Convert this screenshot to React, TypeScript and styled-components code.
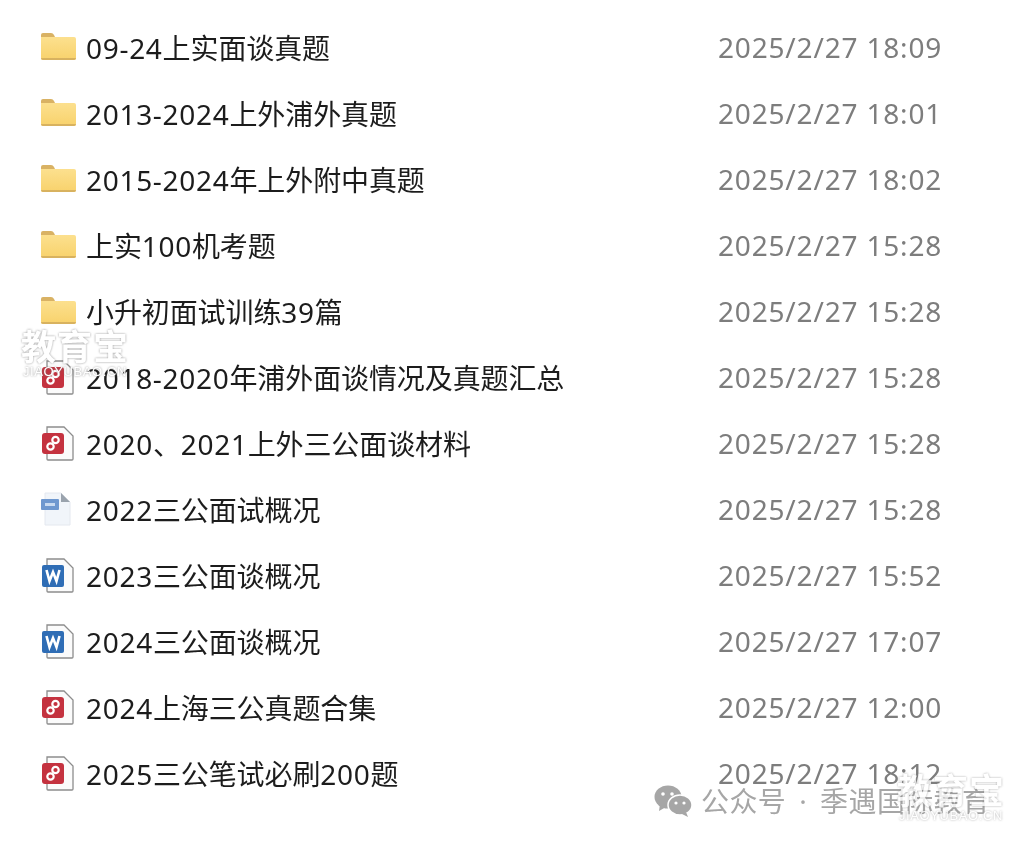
import React from "react";
import styled, { createGlobalStyle } from "styled-components";

type Kind = "folder" | "ppt" | "doc" | "word";

type FileItem = {
  name: string;
  date: string;
  kind: Kind;
};

const files: FileItem[] = [
  { name: "09-24上实面谈真题", date: "2025/2/27 18:09", kind: "folder" },
  { name: "2013-2024上外浦外真题", date: "2025/2/27 18:01", kind: "folder" },
  { name: "2015-2024年上外附中真题", date: "2025/2/27 18:02", kind: "folder" },
  { name: "上实100机考题", date: "2025/2/27 15:28", kind: "folder" },
  { name: "小升初面试训练39篇", date: "2025/2/27 15:28", kind: "folder" },
  { name: "2018-2020年浦外面谈情况及真题汇总", date: "2025/2/27 15:28", kind: "ppt" },
  { name: "2020、2021上外三公面谈材料", date: "2025/2/27 15:28", kind: "ppt" },
  { name: "2022三公面试概况", date: "2025/2/27 15:28", kind: "doc" },
  { name: "2023三公面谈概况", date: "2025/2/27 15:52", kind: "word" },
  { name: "2024三公面谈概况", date: "2025/2/27 17:07", kind: "word" },
  { name: "2024上海三公真题合集", date: "2025/2/27 12:00", kind: "ppt" },
  { name: "2025三公笔试必刷200题", date: "2025/2/27 18:12", kind: "ppt" },
];

const GlobalStyle = createGlobalStyle`
  html, body {
    margin: 0;
    padding: 0;
    background: #fff;
  }
`;

const Page = styled.div`
  position: relative;
  width: 1024px;
  height: 843px;
  overflow: hidden;
  background: #fff;
  font-family: "Noto Sans", "Noto Sans CJK SC", sans-serif;
`;

const List = styled.div`
  display: flex;
  flex-direction: column;
  padding: 15px 0 0 41px;
  filter: blur(0.6px);
`;

const Row = styled.div`
  display: grid;
  grid-template-columns: 45px 632px auto;
  align-items: center;
  height: 66px;
`;

const IconBox = styled.div`
  display: flex;
  align-items: center;
  height: 36px;
`;

const Name = styled.div`
  font-size: 28px;
  line-height: 36px;
  color: #1c1c1c;
  white-space: nowrap;
  letter-spacing: -0.1px;
`;

const Digits = styled.span`
  letter-spacing: 0.7px;
`;

const DateText = styled.div`
  padding-bottom: 2px;
  font-size: 28px;
  line-height: 36px;
  color: #7d7d7d;
  white-space: nowrap;
  letter-spacing: 0.82px;
`;

const Footer = styled.div`
  position: absolute;
  left: 654px;
  top: 783px;
  display: flex;
  align-items: center;
  gap: 9px;
  font-size: 28px;
  line-height: 36px;
  letter-spacing: 0.4px;
  color: #a6a6a6;
  white-space: nowrap;
  filter: blur(0.5px);
`;

const Dot = styled.span`
  margin: 0 13px;
`;

const Mark = styled.div`
  position: absolute;
  display: flex;
  flex-direction: column;
  align-items: center;
  width: 110px;
  color: #fff;
  filter: drop-shadow(0 0 1px rgba(120, 120, 120, 0.75));
`;

const MarkLeft = styled(Mark)`
  left: 20px;
  top: 327px;
`;

const MarkRight = styled(Mark)`
  left: 896px;
  top: 771px;
  opacity: 0.8;
`;

const MarkTitle = styled.div`
  font-size: 35px;
  line-height: 36px;
  font-weight: 700;
  letter-spacing: 1px;
  white-space: nowrap;
  font-family: "Noto Sans CJK SC", sans-serif;
`;

const MarkSub = styled.div`
  margin-top: 3px;
  font-size: 13px;
  line-height: 12px;
  letter-spacing: 0.6px;
  white-space: nowrap;
  font-family: "Liberation Sans", sans-serif;
`;

const FolderIcon = () => (
  <svg width="35" height="30" viewBox="0 0 35 30">
    <defs>
      <linearGradient id="folderFill" x1="0" y1="0" x2="0" y2="1">
        <stop offset="0" stopColor="#fce08e" />
        <stop offset="1" stopColor="#f8d26c" />
      </linearGradient>
    </defs>
    <path d="M0 2q0-2 2-2h8q2 0 3 2l1 2H0z" fill="#d9b264" />
    <path d="M0 4h33q2 0 2 2v19q0 2-2 2H2q-2 0-2-2z" fill="url(#folderFill)" />
    <path d="M0 25h35q0 2-2 2H2q-2 0-2-2z" fill="#d8b25f" />
  </svg>
);

const Sheet = () => (
  <path
    d="M6 1h17l9 9v23q0 1-1 1H7q-1 0-1-1z"
    fill="#fbfbfb"
    stroke="#8d8d8d"
    strokeWidth="1.3"
  />
);

const PptIcon = () => (
  <svg width="34" height="36" viewBox="0 0 34 36">
    <Sheet />
    <rect x="1" y="7" width="22" height="21" rx="3" fill="#c4323f" />
    <circle cx="14.500" cy="14" r="3.200" fill="none" stroke="#fff" strokeWidth="2.200" />
    <circle cx="9.500" cy="20.500" r="3.200" fill="none" stroke="#fff" strokeWidth="2.200" />
  </svg>
);

const DocIcon = () => (
  <svg width="34" height="36" viewBox="0 0 34 36">
    <path d="M4 1h16l9 9v23H4z" fill="#f1f5fa" stroke="#e4e8ef" />
    <path d="M20 1l9 9h-9z" fill="#9aa3ad" />
    <rect x="0" y="7" width="18" height="11" rx="1" fill="#6f98cf" />
    <rect x="4" y="11" width="10" height="3" fill="#c9daf0" />
  </svg>
);

const WordIcon = () => (
  <svg width="34" height="36" viewBox="0 0 34 36">
    <Sheet />
    <rect x="1" y="7" width="22" height="22" rx="2" fill="#2f6db5" />
    <path
      d="M5.500 12l3 11 3.500-9 3.500 9 3-11"
      fill="none"
      stroke="#fff"
      strokeWidth="2.600"
    />
  </svg>
);

const WechatIcon = () => (
  <svg width="38" height="32" viewBox="0 0 38 32">
    <ellipse cx="14" cy="12" rx="13.500" ry="11.500" fill="#a6a6a6" />
    <path d="M6 19l-1 7 7-4z" fill="#a6a6a6" />
    <ellipse cx="26" cy="20" rx="12" ry="10" fill="#a6a6a6" stroke="#fff" strokeWidth="1.500" />
    <path d="M32 27l2 5-6-3z" fill="#a6a6a6" />
    <circle cx="9" cy="9" r="1.800" fill="#fff" />
    <circle cx="18" cy="9" r="1.800" fill="#fff" />
    <circle cx="22" cy="18" r="1.600" fill="#fff" />
    <circle cx="30" cy="18" r="1.600" fill="#fff" />
  </svg>
);

const icons: Record<Kind, React.FC> = {
  folder: FolderIcon,
  ppt: PptIcon,
  doc: DocIcon,
  word: WordIcon,
};

// digits and hyphens run wider than the CJK text in the reference
const renderName = (name: string) =>
  name.split(/([0-9-]+)/).map((part, i) =>
    /^[0-9-]+$/.test(part) ? <Digits key={i}>{part}</Digits> : part
  );

export default function App() {
  return (
    <Page>
      <GlobalStyle />
      <List>
        {files.map((file) => {
          const Icon = icons[file.kind];
          return (
            <Row key={file.name}>
              <IconBox>
                <Icon />
              </IconBox>
              <Name>{renderName(file.name)}</Name>
              <DateText>{file.date}</DateText>
            </Row>
          );
        })}
      </List>
      <MarkLeft>
        <MarkTitle>教育宝</MarkTitle>
        <MarkSub>JIAOYUBAO.CN</MarkSub>
      </MarkLeft>
      <Footer>
        <WechatIcon />
        <span>
          公众号<Dot>·</Dot>季遇国际教育
        </span>
      </Footer>
      <MarkRight>
        <MarkTitle>教育宝</MarkTitle>
        <MarkSub>JIAOYUBAO.CN</MarkSub>
      </MarkRight>
    </Page>
  );
}
